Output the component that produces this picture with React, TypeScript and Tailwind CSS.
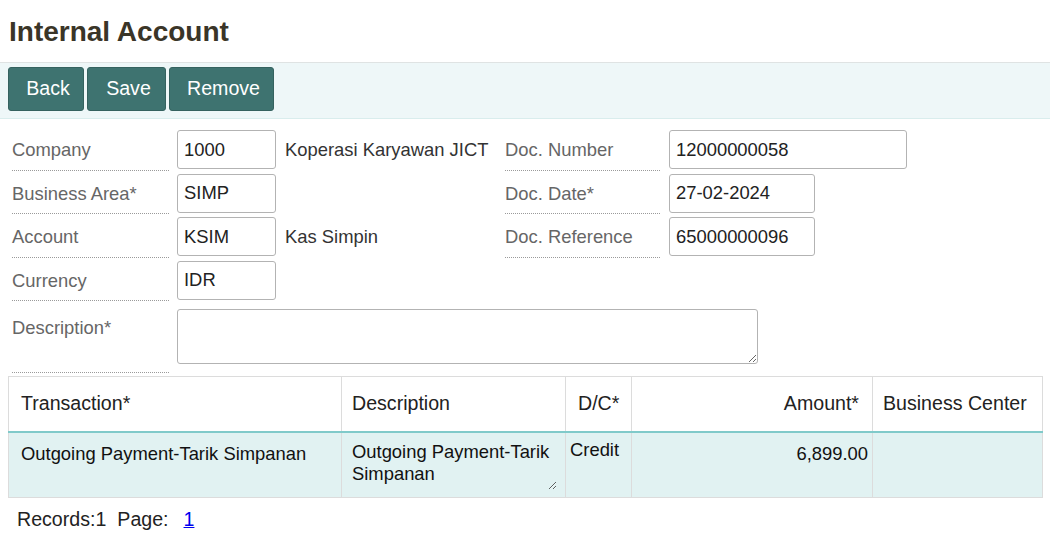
import React from "react";

interface FieldRow {
  label: string;
  value: string;
  note?: string;
  right?: { label: string; value: string; width: string };
}

const rows: FieldRow[] = [
  {
    label: "Company",
    value: "1000",
    note: "Koperasi Karyawan JICT",
    right: { label: "Doc. Number", value: "12000000058", width: "w-[238px]" },
  },
  {
    label: "Business Area*",
    value: "SIMP",
    right: { label: "Doc. Date*", value: "27-02-2024", width: "w-[146px]" },
  },
  {
    label: "Account",
    value: "KSIM",
    note: "Kas Simpin",
    right: { label: "Doc. Reference", value: "65000000096", width: "w-[146px]" },
  },
  { label: "Currency", value: "IDR" },
];

function TextBox({ value, width }: { value: string; width: string }) {
  return (
    <input
      readOnly
      defaultValue={value}
      className={`${width} mt-[3px] h-[39px] shrink-0 rounded-[3px] border border-[#b3b3b3] bg-white px-[6px] text-[18.4px] text-[#222] outline-none`}
    />
  );
}

function Label({ text, width }: { text: string; width: string }) {
  return (
    <div className={`${width} h-full shrink-0 border-b border-dotted border-[#9a9a9a] pt-[12px] leading-[21px] text-[#666]`}>
      {text}
    </div>
  );
}

export default function App() {
  return (
    <div className="min-h-screen bg-white font-['Liberation_Sans',Arial,sans-serif] text-[18.4px]">
      <h1 className="h-[62px] pl-[9px] pt-[16px] text-[28px] font-bold leading-[32px] text-[#3a3528]">
        Internal Account
      </h1>

      <div className="flex h-[57px] gap-[3px] border-t border-b border-t-[#dfe3e3] border-b-[#d9eded] bg-[#eef7f8] px-[8px] pt-[4px]">
        {[
          { t: "Back", w: "w-[76px]" },
          { t: "Save", w: "w-[79px]" },
          { t: "Remove", w: "w-[105px]" },
        ].map((b) => (
          <button
            key={b.t}
            className={`${b.w} flex h-[44px] items-center justify-center rounded-[3px] border border-[#35625f] bg-[#3e7370] pl-[4px] text-[19.6px] text-white`}
          >
            {b.t}
          </button>
        ))}
      </div>

      <div className="mt-[8px] pl-[12px]">
        {rows.map((r) => (
          <div key={r.label} className="flex h-[43.5px] items-start">
            <div className="flex h-full w-[493px] shrink-0 items-start">
              <Label text={r.label} width="w-[157px]" />
              <div className="ml-[8px]">
                <TextBox value={r.value} width="w-[99px]" />
              </div>
              {r.note && (
                <div className="ml-[9px] pt-[12px] leading-[21px] text-[#333]">{r.note}</div>
              )}
            </div>
            {r.right && (
              <div className="flex h-full items-start">
                <Label text={r.right.label} width="w-[155px]" />
                <div className="ml-[9px]">
                  <TextBox value={r.right.value} width={r.right.width} />
                </div>
              </div>
            )}
          </div>
        ))}

        <div className="flex h-[72px] items-start">
          <div className="h-full w-[157px] shrink-0 border-b border-dotted border-[#9a9a9a] pt-[16px] leading-[21px] text-[#666]">
            Description*
          </div>
          <textarea
            readOnly
            className="ml-[8px] mt-[8px] h-[55px] w-[581px] rounded-[3px] border border-[#b3b3b3] bg-white px-[6px] outline-none"
          />
        </div>
      </div>

      <div className="mt-[3px] px-[8px]">
        <table className="w-[1034px] table-fixed border-collapse">
          <colgroup>
            <col className="w-[333px]" />
            <col className="w-[224px]" />
            <col className="w-[66px]" />
            <col className="w-[241px]" />
            <col className="w-[170px]" />
          </colgroup>
          <thead>
            <tr className="h-[55px] border-b-2 border-b-[#80caca] text-[19.6px] text-[#222]">
              <th className="border border-[#dcdcdc] pl-[12px] text-left font-normal">Transaction*</th>
              <th className="border border-[#dcdcdc] pl-[10px] text-left font-normal">Description</th>
              <th className="border border-[#dcdcdc] pl-[12px] text-left font-normal">D/C*</th>
              <th className="border border-[#dcdcdc] pr-[13px] text-right font-normal">Amount*</th>
              <th className="border border-[#dcdcdc] pl-[10px] text-left font-normal">Business Center</th>
            </tr>
          </thead>
          <tbody>
            <tr className="h-[66px] bg-[#e1f2f2] align-top text-[#111]">
              <td className="border border-[#dcdcdc] pl-[12px] pt-[10px] leading-[21px]">
                Outgoing Payment-Tarik Simpanan
              </td>
              <td className="border border-[#dcdcdc] pl-[5px] pr-[8px] pt-[7px]">
                <textarea
                  readOnly
                  defaultValue="Outgoing Payment-Tarik Simpanan"
                  className="block h-[50px] w-full resize border-0 bg-transparent px-[5px] pt-[1px] text-[18.4px] leading-[22px] text-[#111] outline-none"
                />
              </td>
              <td className="border border-[#dcdcdc] pl-[4px] pt-[6px] leading-[21px]">Credit</td>
              <td className="border border-[#dcdcdc] pr-[4px] pt-[10px] text-right leading-[21px]">6,899.00</td>
              <td className="border border-[#dcdcdc]"></td>
            </tr>
          </tbody>
        </table>
      </div>

      <div className="mt-[10px] flex pl-[17px] text-[19.6px] leading-[23px] text-[#222]">
        <span>Records:1</span>
        <span className="ml-[11px]">Page:</span>
        <a href="#" className="ml-[15px] text-[#0000ee] underline">
          1
        </a>
      </div>
    </div>
  );
}
